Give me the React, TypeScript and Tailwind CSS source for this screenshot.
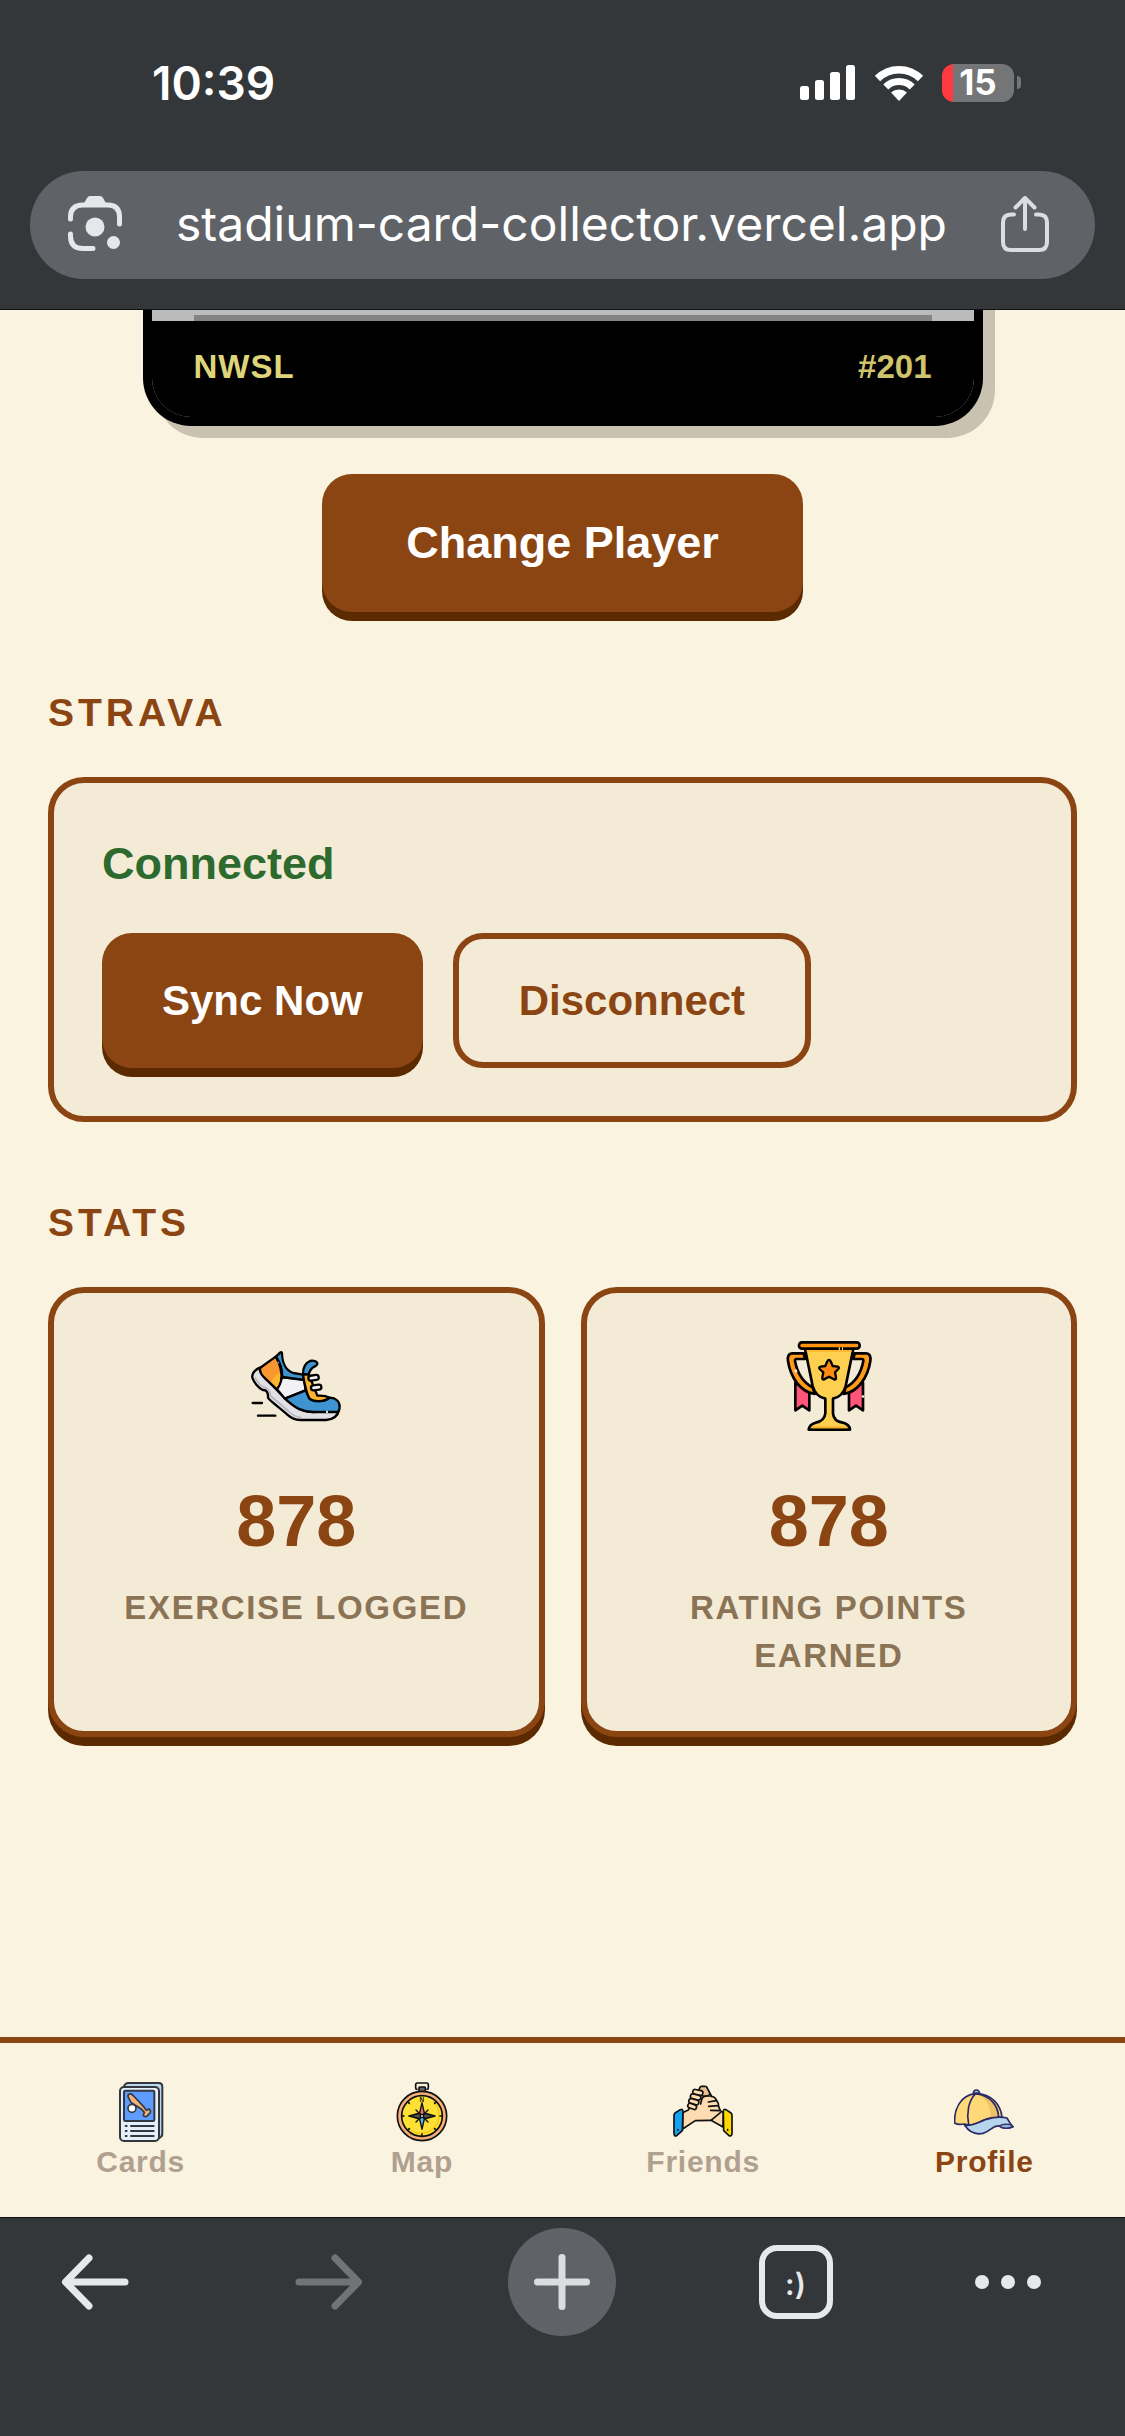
import type { ReactNode } from "react";

function SignalIcon() {
  return (
    <svg className="h-9 w-14" viewBox="0 0 56 36" fill="#fff" aria-hidden="true">
      <rect x="0" y="21" width="9" height="14" rx="2.5" />
      <rect x="15" y="15" width="9" height="20" rx="2.5" />
      <rect x="30" y="7" width="10" height="28" rx="2.5" />
      <rect x="46" y="0" width="9" height="35" rx="2.5" />
    </svg>
  );
}

function WifiIcon() {
  return (
    <svg className="h-9 w-[50px]" viewBox="0 0 50 36" aria-hidden="true">
      <path d="M3.5 13.5 A30.5 30.5 0 0 1 46.5 13.5" fill="none" stroke="#fff" strokeWidth="7.5" />
      <path d="M11.8 22 A18.7 18.7 0 0 1 38.2 22" fill="none" stroke="#fff" strokeWidth="7" />
      <path d="M25 36 L17 27.6 A12 12 0 0 1 33 27.6 Z" fill="#fff" />
    </svg>
  );
}

function Battery() {
  return (
    <div className="flex items-center gap-[3px]" role="img" aria-label="Battery 15 percent">
      <div className="flex h-[38px] w-[72px] items-center justify-center rounded-[12px] bg-[linear-gradient(to_right,#ff3a3f_11px,#747577_11px)]">
        <span className="text-[35px] leading-none font-bold text-white">15</span>
      </div>
      <div className="h-[13px] w-1 rounded-r-full bg-[#747577]" />
    </div>
  );
}

function LensIcon() {
  return (
    <svg className="h-14 w-[54px]" viewBox="68 197 54 56" fill="none" stroke="#e5e8eb" strokeWidth="5" aria-hidden="true">
      <path d="M83 206 L87 199 Q88 197 90 197 H100 Q102 197 103 199 L107 206Z" fill="#e5e8eb" stroke="none" />
      <path d="M70.500 220 V218 Q70.500 206 83 206 H108 Q119.500 206 119.500 218 V225" strokeLinecap="round" />
      <path d="M70.500 235 V237 Q70.500 249.500 83 249.500 H93" strokeLinecap="round" />
      <circle cx="95" cy="228" r="9.500" fill="#e5e8eb" stroke="none" />
      <circle cx="113.500" cy="243.500" r="6.500" fill="#e5e8eb" stroke="none" />
    </svg>
  );
}

function ShareIcon() {
  return (
    <svg className="h-14 w-12" viewBox="1001 198 48 56" fill="none" stroke="#dcdde0" strokeWidth="4" strokeLinecap="round" strokeLinejoin="round" aria-hidden="true">
      <path d="M1014 216.500 H1011 Q1003 216.500 1003 224.500 V244 Q1003 252 1011 252 H1039 Q1047 252 1047 244 V224.500 Q1047 216.500 1039 216.500 H1036" />
      <path d="M1025 231 V200.500 M1015.500 209.500 L1025 200 L1034.500 209.500" />
    </svg>
  );
}

function ShoeIcon() {
  return (
    <svg className="size-[90px]" viewBox="63 33 270 270" fill="none" stroke="#000" strokeWidth="7" strokeLinejoin="round" strokeLinecap="round" aria-hidden="true">
      <path fill="#e1e0e4" d="M90 113 C76 119 65 128 67 143 C72 158 88 176 98 180 C110 179 115 188 114 203 C116 210 150 234 172 254 C184 265 196 270 210 270 L288 270 C310 268 324 256 327 240 L250 246 C215 245 200 235 165 205 L105 143Z" />
      <path stroke="#b9b7be" strokeWidth="5" d="M76 144 C84 160 94 170 104 172 C116 174 120 186 122 198 L178 246 C190 257 202 262 212 262" />
      <path fill="#f2f1f4" d="M141 178 L157 142 L222 148 L227 181 L165 206Z" />
      <path fill="#f9962f" d="M90 114 L137 80 C150 100 158 130 153 153 Q149 167 141 178 L105 145 C94 135 88 126 90 114Z" />
      <path fill="#fdb42e" stroke="none" d="M150 128 C137 132 128 146 124 157 L140 172 C149 160 152 143 150 128Z" />
      <path fill="#3e94d1" d="M138 80 L150 68 Q156 64 156 72 C157 98 168 122 190 129 L219 134 L222 150 L157 141 C157 118 150 97 138 80Z" />
      <path fill="#3e94d1" d="M165 206 L227 181 L238 205 C254 217 284 216 300 203 C317 204 329 214 329 230 Q329 240 324 246 L250 246 C216 245 196 235 165 206Z" />
      <path fill="#fdb42e" d="M219 134 C224 165 228 188 238 205 C250 217 282 216 299 203 C290 198 276 196 262 197 L236 132Z" />
      <path fill="#3e94d1" d="M219 132 C219 111 228 98 240 93 C252 90 263 95 262 102 C260 110 250 109 245 116 C239 122 238 128 236 133Z" />
      <rect x="235" y="136" width="31" height="15" rx="7" fill="#f2f1f4" transform="rotate(-8 250 143)" />
      <rect x="243" y="165" width="31" height="15" rx="7" fill="#f2f1f4" transform="rotate(-8 258 172)" />
      <path d="M68 219 H96 M84 257 H136" />
      <path stroke="#bfe6fb" strokeWidth="6" d="M291 242 V249" strokeLinecap="butt" />
      <path stroke="#3e94d1" strokeWidth="5" d="M145 95 V101" strokeLinecap="butt" />
    </svg>
  );
}

function TrophyHandle() {
  return (
    <>
      <path fill="#ff5578" d="M76 158 V241 L97 227 L118 241 V186Z" />
      <path fill="#ff9a1c" d="M101 70 H68 C55 70 52 80 54 93 C61 140 90 186 134 192 L128 172 C100 158 82 130 75 93 Q74 87 80 87 L105 87Z" />
    </>
  );
}

function TrophyIcon() {
  return (
    <svg className="size-[90px]" viewBox="42 33 270 270" fill="none" stroke="#000" strokeWidth="8" strokeLinejoin="round" strokeLinecap="round" aria-hidden="true">
      <TrophyHandle />
      <g transform="matrix(-1 0 0 1 355 0)">
        <TrophyHandle />
      </g>
      <path fill="#ffd050" d="M105 56 L128 168 C134 190 150 203 166 206 L166 250 C164 268 152 275 137 278 C123 282 117 289 116 299 L240 299 C239 288 231 281 218 278 C201 275 190 268 189 250 L189 206 C205 203 221 190 227 168 L250 56Z" />
      <path stroke="#ffae2b" strokeWidth="5" d="M110 63 H245 M127 292 H229" strokeLinecap="butt" />
      <rect x="87" y="37" width="182" height="19" rx="9" fill="#ff9412" />
      <path stroke="#ffd050" strokeWidth="8" d="M206 56 H210 M216 56 H219" strokeLinecap="butt" />
      <path fill="#ff8a12" strokeWidth="7" d="M177 90 Q181 90 183 96 L188 108 L203 110 Q209 112 205 117 L195 127 L198 142 Q199 150 192 148 L177 140 L163 148 Q156 150 157 142 L160 127 L149 117 Q145 112 152 110 L166 108 L171 96 Q173 90 177 90Z" />
      <path stroke="#f4ebd7" strokeWidth="8" d="M279 196 V203" strokeLinecap="butt" />
      <path stroke="#f4ebd7" strokeWidth="8" d="M76 119 L79 127" strokeLinecap="butt" />
    </svg>
  );
}

function CardsIcon() {
  return (
    <svg className="size-[60px]" viewBox="62 36 180 180" fill="none" stroke="#34383d" strokeWidth="6" strokeLinejoin="round" strokeLinecap="round" aria-hidden="true">
      <path fill="#bcd8ee" d="M100 51 Q104 39 114 39 H205 Q216 39 216 50 V191 Q216 200 206 204Z" />
      <rect x="89" y="51" width="117" height="162" rx="12" fill="#e3effb" />
      <rect x="101" y="62" width="91" height="91" rx="4" fill="#5f9cff" />
      <path fill="#f3b27a" strokeWidth="5" d="M114 82 C110 73 119 68 127 75 L160 110 L168 121 L177 117 Q182 123 180 128 L169 139 Q162 142 159 136 L162 127 L153 117 L122 97Z" />
      <circle cx="125" cy="115" r="12" fill="#fff" strokeWidth="5" />
      <path d="M106 168 H109 M122 168 H190 M106 183 H109 M122 183 H190 M106 198 H109 M122 198 H190" />
    </svg>
  );
}

function CompassIcon() {
  return (
    <svg className="size-[60px]" viewBox="66 36 180 180" fill="none" stroke="#111" strokeWidth="5" strokeLinejoin="round" strokeLinecap="round" aria-hidden="true">
      <path fill="#faf3e0" d="M141 58 Q137 58 137 53 V44 Q137 39 142 39 H170 Q175 39 175 44 V53 Q175 58 171 58" />
      <rect x="147" y="51" width="19" height="16" rx="2" fill="#666" />
      <circle cx="156" cy="138" r="74" fill="#f6ae7b" />
      <circle cx="156" cy="138" r="61" fill="#ffe135" />
      <path stroke="#f5c81d" strokeWidth="5" d="M190 95 A55 55 0 0 1 118 178" />
      <path d="M97 138 H102 M210 138 H215 M156 192 V197 M114 96 L118 100 M198 96 L194 100 M114 180 L118 176 M198 180 L194 176" />
      <text x="156" y="95" textAnchor="middle" fontSize="19" fontWeight="700" fill="#111" stroke="none">N</text>
      <path strokeWidth="4" d="M138 120 L174 156 M174 120 L138 156" />
      <path fill="#555" strokeWidth="5" d="M117 138 L147 130 L156 138 L147 146Z M195 138 L165 130 L156 138 L165 146Z" />
      <path fill="#f36f66" strokeWidth="4" d="M156 98 L149 129 L156 138 L163 129Z" />
      <path fill="#48c0f2" strokeWidth="4" d="M156 178 L149 147 L156 138 L163 147Z" />
      <circle cx="156" cy="138" r="5" fill="#ddd" strokeWidth="4" />
    </svg>
  );
}

function FriendsIcon() {
  return (
    <svg className="size-[60px]" viewBox="69 36 180 180" fill="none" stroke="#111" strokeWidth="5" strokeLinejoin="round" strokeLinecap="round" aria-hidden="true">
      <path fill="#fddcb2" d="M98 128 L116 119 L128 90 L146 62 L150 52 Q152 49 158 49 L169 50 L182 73 L184 79 Q196 80 200 92 Q207 100 206 110 L211 122 L220 128 L219 171 L183 151 L136 152 L98 177Z" />
      <path fill="#e9bf94" strokeWidth="4" d="M147 62 L150 52 Q152 49 158 49 L169 50 L180 72 L172 78 L156 78Z" />
      <g fill="#fddcb2">
        <rect x="128" y="60" width="31" height="14" rx="7" transform="rotate(12 143 67)" />
        <rect x="121" y="74" width="32" height="14" rx="7" transform="rotate(14 137 81)" />
        <rect x="116" y="88" width="31" height="14" rx="7" transform="rotate(16 131 95)" />
        <rect x="113" y="102" width="27" height="14" rx="7" transform="rotate(20 126 109)" />
      </g>
      <path d="M152 102 L156 86 Q160 79 168 78 H184 M175 96 L199 92 M176 109 L205 107 M182 121 L208 122 M183 151 L212 127" />
      <path fill="#12a5f4" d="M75 129 L91 119 Q99 116 99 124 L97 182 L80 197 Q72 200 72 190 V134Z" />
      <path fill="#ffd800" d="M243 129 L228 119 Q220 116 220 124 L221 182 L237 197 Q246 200 246 190 V134Z" />
      <path d="M84 179 V181 M233 179 V181" />
    </svg>
  );
}

function CapIcon() {
  return (
    <svg className="size-[60px]" viewBox="73 36 180 180" fill="none" stroke="#2b2966" strokeWidth="5" strokeLinejoin="round" strokeLinecap="round" aria-hidden="true">
      <path fill="#ffd977" d="M75 159 C73 118 91 76 138 71 C188 72 214 106 217 143 C190 140 165 148 145 158 C130 166 115 166 105 162 C94 164 82 164 75 159Z" />
      <path fill="#edc268" stroke="none" d="M150 76 C176 92 184 118 182 142 L204 140 C203 110 184 82 150 76Z" />
      <path d="M136 73 C117 91 110 130 117 163 M142 72 C184 78 205 108 207 142" />
      <path fill="#9fc6e6" d="M131 72 Q131 60 140 60 Q149 60 150 72 Q140 67 131 72Z" />
      <path fill="#b7d5ec" d="M105 166 C122 170 148 157 170 148 C190 142 215 140 232 144 C238 154 242 164 250 170 C236 177 219 176 209 168 C190 164 184 184 160 190 C132 196 117 184 105 166Z" />
      <path fill="#8fb5da" strokeWidth="4" d="M209 168 Q222 159 243 164 L250 170 C236 177 219 176 209 168Z" />
    </svg>
  );
}

function ArrowIcon() {
  return (
    <svg className="h-14 w-[68px]" viewBox="0 0 68 56" fill="none" stroke="currentColor" strokeWidth="7" strokeLinecap="round" strokeLinejoin="round" aria-hidden="true">
      <path d="M64 28 H5 M28 4 L4.500 28 L28 52" />
    </svg>
  );
}

function StatCard({ icon, value, label }: { icon: ReactNode; value: string; label: string }) {
  return (
    <article className="flex flex-col items-center rounded-[36px] border-6 border-[#8b4513] bg-[#f4ebd7] px-12 pt-12 pb-[51px] text-center shadow-[0_9px_0_#5c2a00]">
      {icon}
      <p className="mt-12 text-[72px] leading-[84px] font-bold text-[#8b4513]">{value}</p>
      <p className="mt-[21px] text-[33px] leading-12 font-bold tracking-wider text-[#8b7355] uppercase">{label}</p>
    </article>
  );
}

const tabs = [
  { name: "Cards", icon: <CardsIcon />, active: false },
  { name: "Map", icon: <CompassIcon />, active: false },
  { name: "Friends", icon: <FriendsIcon />, active: false },
  { name: "Profile", icon: <CapIcon />, active: true },
];

export default function App() {
  return (
    <div className="flex min-h-screen flex-col bg-[#faf3e0] font-['Liberation_Sans',Arial,sans-serif]">
      <header className="border-b border-[#111214] bg-[#34373a] px-[30px] pb-[30px] font-['Inter',sans-serif]">
        <div className="flex h-[171px] items-center justify-between pr-[74px] pb-[6px] pl-[122px]">
          <time className="text-[46px] leading-none font-semibold text-white">10:39</time>
          <div className="flex items-center gap-[18px]">
            <SignalIcon />
            <WifiIcon />
            <Battery />
          </div>
        </div>
        <div className="flex h-[108px] items-center gap-6 rounded-full bg-[#5f6367] pr-[46px] pb-[2px] pl-[38px]">
          <button type="button" aria-label="Search by image">
            <LensIcon />
          </button>
          <input
            type="text"
            aria-label="Address"
            defaultValue="stadium-card-collector.vercel.app"
            className="min-w-0 flex-1 bg-transparent text-center text-[48px] text-white outline-none"
          />
          <button type="button" aria-label="Share">
            <ShareIcon />
          </button>
        </div>
      </header>

      <main className="flex flex-1 flex-col overflow-hidden px-12">
        {/* Only the foot of the player card is scrolled into view. */}
        <div className="mx-auto -mt-12 w-[840px] max-w-full rounded-b-[48px] border-x-9 border-b-9 border-black bg-[#bbbbbb] pt-12 shadow-[12px_12px_0_#c9c2b1]">
          <div className="mx-[42px] mt-[5px] h-[6px] bg-[#838383]" />
          <div className="flex h-24 items-center justify-between rounded-b-[39px] bg-black px-[42px] pb-[6px] text-[33px] leading-none font-bold">
            <span className="tracking-[1px] text-[#ded57a]">NWSL</span>
            <span className="text-[#cfc46c]">#201</span>
          </div>
        </div>

        <button
          type="button"
          className="mx-auto mt-12 h-[138px] rounded-[30px] bg-[#8b4513] px-[84px] text-[45px] font-bold text-white shadow-[0_9px_0_#5c2a00]"
        >
          Change Player
        </button>

        <section className="mt-[78px]">
          <h2 className="text-[39px] leading-[45px] font-bold tracking-[4px] text-[#8b4513]">STRAVA</h2>
          <div className="mt-[42px] rounded-[36px] border-6 border-[#8b4513] bg-[#f4ebd7] p-12">
            <p className="text-[45px] leading-[66px] font-bold text-[#2d6a2e]">Connected</p>
            <div className="mt-9 flex gap-[30px]">
              <button type="button" className="h-[135px] rounded-[30px] bg-[#8b4513] px-[60px] text-[42px] font-bold text-white shadow-[0_9px_0_#5c2a00]">
                Sync Now
              </button>
              <button type="button" className="h-[135px] rounded-[30px] border-6 border-[#8b4513] px-[60px] text-[42px] font-bold text-[#8b4513]">
                Disconnect
              </button>
            </div>
          </div>
        </section>

        <section className="mt-[78px] pb-12">
          <h2 className="text-[39px] leading-[45px] font-bold tracking-[4px] text-[#8b4513]">STATS</h2>
          <div className="mt-[42px] grid grid-cols-2 gap-9">
            <StatCard icon={<ShoeIcon />} value="878" label="Exercise Logged" />
            <StatCard icon={<TrophyIcon />} value="878" label="Rating Points Earned" />
          </div>
        </section>
      </main>

      <nav className="grid grid-cols-4 border-t-6 border-[#8b4513] pt-[39px] pb-[36px]" aria-label="Sections">
        {tabs.map((tab) => (
          <a
            key={tab.name}
            href={"#" + tab.name.toLowerCase()}
            aria-current={tab.active ? "page" : undefined}
            className={
              "flex flex-col items-center text-[30px] leading-[39px] font-bold tracking-wide " +
              (tab.active ? "text-[#8b4513]" : "text-[#b0a090]")
            }
          >
            {tab.icon}
            {tab.name}
          </a>
        ))}
      </nav>

      <footer className="border-t border-[#111214] bg-[#333739] pt-[10px] pb-[100px] text-[#e6e9ec]">
        <div className="flex items-center justify-between pr-[84px] pl-[41px]">
          <button type="button" aria-label="Back" className="flex size-[108px] items-center justify-center">
            <ArrowIcon />
          </button>
          <button type="button" aria-label="Forward" disabled className="flex size-[108px] rotate-180 items-center justify-center text-[#727376]">
            <ArrowIcon />
          </button>
          <button type="button" aria-label="New tab" className="flex size-[108px] items-center justify-center rounded-full bg-[#5f6367]">
            <svg className="size-14" viewBox="0 0 56 56" stroke="#dcdde0" strokeWidth="7" strokeLinecap="round" aria-hidden="true">
              <path d="M28 3.500 V52.500 M3.500 28 H52.500" />
            </svg>
          </button>
          <button type="button" aria-label="Open tabs" className="flex size-[108px] items-center justify-center">
            <span className="flex size-[74px] items-center justify-center rounded-[18px] border-6 border-[#e6e9ec] pt-1 font-['Inter',sans-serif] text-[30px] leading-none font-semibold">
              :)
            </span>
          </button>
          <button type="button" aria-label="More" className="flex h-[108px] w-[66px] items-center justify-between">
            <span className="size-[14px] rounded-full bg-[#e6e9ec]" />
            <span className="size-[14px] rounded-full bg-[#e6e9ec]" />
            <span className="size-[14px] rounded-full bg-[#e6e9ec]" />
          </button>
        </div>
      </footer>
    </div>
  );
}
